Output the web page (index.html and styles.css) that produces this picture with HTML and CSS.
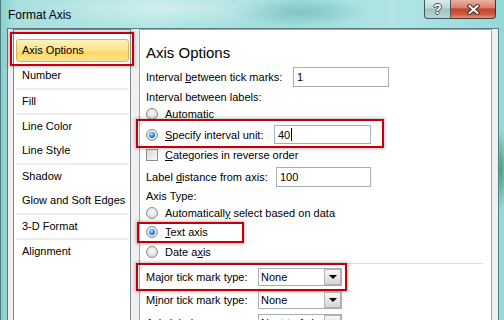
FILE: index.html
```html
<!DOCTYPE html>
<html lang="en">
<head>
	<meta charset="UTF-8">
	<title>Format Axis</title>
	<link rel="stylesheet" href="styles.css">
</head>
<body>
	<div class="window">
		<!--title bar-->
		<div class="titlebar">
			<span class="title">Format Axis</span>
			<div class="caption">
				<span class="cbtn help">?</span>
				<span class="cbtn close">
					<svg width="13" height="11" viewBox="0 0 13 11">
						<path d="M2.5 2 L10.5 9 M10.5 2 L2.5 9" stroke="#4a2a26" stroke-width="4.2" stroke-linecap="square"/>
						<path d="M2.5 2 L10.5 9 M10.5 2 L2.5 9" stroke="#fff" stroke-width="2" stroke-linecap="square"/>
					</svg>
				</span>
			</div>
		</div>
		<div class="client">
			<!--category list-->
			<ul class="nav">
				<li class="current">Axis Options<span class="mark nav-mark"></span></li>
				<li>Number</li>
				<li class="sep">Fill</li>
				<li class="sep">Line Color</li>
				<li>Line Style</li>
				<li class="sep">Shadow</li>
				<li>Glow and Soft Edges</li>
				<li class="sep">3-D Format</li>
				<li class="sep">Alignment</li>
			</ul>
			<!--options-->
			<div class="panel">
				<h1>Axis Options</h1>
				<div class="row r-tick">
					<span class="lbl lbl-tick">Interval <u>b</u>etween tick marks:</span>
					<span class="field f-tick">1</span>
				</div>
				<div class="row r-labels"><span>Interval between labels:</span></div>
				<div class="row r-auto"><span class="radio"></span><span>Automatic</span></div>
				<div class="row r-spec">
					<span class="radio on"></span>
					<span class="lbl lbl-spec"><u>S</u>pecify interval unit:</span>
					<span class="field f-spec">40<span class="caret"></span></span>
					<span class="mark spec-mark"></span>
				</div>
				<div class="row r-cat"><span class="check"></span><span><u>C</u>ategories in reverse order</span></div>
				<div class="row r-dist">
					<span class="lbl lbl-dist">Label <u>d</u>istance from axis:</span>
					<span class="field f-dist">100</span>
				</div>
				<div class="row r-type"><span>Axis Type:</span></div>
				<div class="row r-autosel"><span class="radio"></span><span>Automaticall<u>y</u> select based on data</span></div>
				<div class="row r-text"><span class="radio on"></span><span><u>T</u>ext axis</span><span class="mark text-mark"></span></div>
				<div class="row r-date"><span class="radio"></span><span>Date a<u>x</u>is</span></div>
				<div class="rule"></div>
				<div class="row r-major">
					<span class="lbl lbl-sel">Ma<u>j</u>or tick mark type:</span>
					<span class="select">None<span class="btn"></span></span>
					<span class="mark major-mark"></span>
				</div>
				<div class="row r-minor">
					<span class="lbl lbl-sel">M<u>i</u>nor tick mark type:</span>
					<span class="select">None<span class="btn"></span></span>
				</div>
				<div class="row r-axlab">
					<span class="lbl lbl-sel"><u>A</u>xis labels:</span>
					<span class="select">Next to Axis<span class="btn"></span></span>
				</div>
			</div>
		</div>
	</div>
</body>
</html>
```

FILE: styles.css
```css
body{
	margin:0;
	width:504px;
	height:320px;
	overflow:hidden;
	font:11px "Liberation Sans", Arial, sans-serif;
	color:#000;
	background:
		radial-gradient(ellipse 70px 14px at 300px 12px, rgba(70,150,150,.35), transparent),
		radial-gradient(ellipse 140px 18px at 170px 8px, rgba(255,255,255,.35), transparent),
		radial-gradient(ellipse 6px 40px at 501px 170px, rgba(60,140,100,.8), transparent),
		linear-gradient(90deg, #86cfcc 0, #a9dfdf 3%, #b6e6e6 30%, #9fdcdc 58%, #b2e5e5 78%, #95d8d8 100%);
}
.window{
	height:320px;
	border-left:1px solid #4e7d7f;
	box-sizing:border-box;
}
/*title bar*/
.titlebar{
	height:28px;
	display:flex;
	align-items:flex-start;
}
.title{
	padding:8px 0 0 7px;
	font-size:12px;
	line-height:14px;
}
.caption{
	margin-left:auto;
	margin-right:8px;
	display:flex;
	height:19px;
}
.cbtn{
	display:flex;
	align-items:center;
	justify-content:center;
	box-sizing:border-box;
	height:19px;
	border:1px solid #3e585c;
	border-top:0;
}
.help{
	width:27px;
	border-radius:0 0 0 4px;
	background:linear-gradient(#dcecec, #bcd6d8 45%, #9fc0c3 50%, #b8d8da);
	color:#fff;
	font-weight:bold;
	font-size:14px;
	text-shadow:1px 0 #3d5457, -1px 0 #3d5457, 0 1px #3d5457, 0 -1px #3d5457;
}
.close{
	width:45px;
	border-left:0;
	border-color:#4a3430;
	border-radius:0 0 4px 0;
	background:linear-gradient(#eab0a0, #d98270 42%, #c4442c 50%, #cf5a40 80%, #e69479);
}
/*client area*/
.client{
	margin-left:6px;
	width:492px;
	height:292px;
	box-sizing:border-box;
	border:1px solid #557c80;
	border-bottom:0;
	background:#f0f0f0;
	display:flex;
	align-items:flex-start;
	gap:8px;
	padding:0 6px 0 5px;
}
.mark{
	position:absolute;
	box-sizing:border-box;
	border:2px solid #c2000d;
	box-shadow:0 0 3px 1px rgba(0,0,0,.25);
}
/*list*/
.nav{
	list-style:none;
	margin:0;
	padding:8px 0 0;
	width:118px;
	height:300px;
	box-sizing:border-box;
	border:1px solid #828790;
	background:#fff;
}
.nav li{
	height:25px;
	line-height:25px;
	margin:0 1px 0 2px;
	padding-left:6px;
	box-sizing:border-box;
	white-space:nowrap;
}
.nav li.sep{
	border-top:2px solid #ebebf0;
	line-height:23px;
}
.nav li.current{
	position:relative;
	height:23px;
	line-height:21px;
	margin-top:1px;
	margin-bottom:1px;
	padding-left:5px;
	border:1px solid #d6b45a;
	border-radius:3px;
	background:linear-gradient(#fef3bf, #fde48e 45%, #fcd86a 60%, #fde391);
}
.nav-mark{
	left:-7px;
	top:-8px;
	width:124px;
	height:34px;
}
/*panel*/
.panel{
	width:353px;
	height:300px;
	box-sizing:border-box;
	border:1px solid #a5a5ad;
	background:#fff;
	padding:12px 0 0 6px;
}
h1{
	margin:0;
	height:22px;
	line-height:22px;
	font-size:15px;
	font-weight:normal;
}
.row{
	display:flex;
	align-items:center;
	position:relative;
	white-space:nowrap;
}
.r-tick{height:26px;}
.r-labels{height:14px;}
.r-auto{height:20px;}
.r-spec{height:21px;}
.r-cat{height:20px;}
.r-dist{height:23px;}
.r-type{height:16px;}
.r-autosel{height:18px;}
.r-text{height:20px;}
.r-date{height:19px;}
.r-major{height:24px;}
.r-minor{height:21px;}
.r-axlab{height:26px;}

.lbl-tick{width:147px;}
.lbl-spec{width:109px;}
.lbl-dist{width:130px;}
.lbl-sel{width:112px;}

.field{
	display:flex;
	align-items:center;
	height:20px;
	box-sizing:border-box;
	border:1px solid #a9aeb6;
	padding-left:3px;
}
.f-tick{width:96px;}
.f-spec{width:97px;height:19px;}
.f-dist{width:95px;}
.caret{
	display:inline-block;
	width:1px;
	height:13px;
	margin-left:1px;
	background:#000;
}
.radio{
	position:relative;
	flex:none;
	width:12px;
	height:12px;
	box-sizing:border-box;
	border-radius:50%;
	border:1px solid #8e8f8f;
	background:radial-gradient(circle at 50% 40%, #fbfbfb, #dedede 65%, #c4c4c4);
	margin-right:7px;
}
.radio.on::after{
	content:'';
	position:absolute;
	left:2px;
	top:2px;
	width:6px;
	height:6px;
	border-radius:50%;
	background:radial-gradient(circle at 40% 35%, #b0e6fc, #2e8bd2 50%, #123f70);
}
.check{
	flex:none;
	width:12px;
	height:12px;
	box-sizing:border-box;
	border:1px solid #8e8f8f;
	background:linear-gradient(135deg, #d6d6d6, #fbfbfb);
	margin-right:7px;
}
.rule{
	width:337px;
	height:1px;
	margin:2px 0 1px;
	background:#dcdcdc;
}
.select{
	display:flex;
	align-items:center;
	width:84px;
	height:18px;
	box-sizing:border-box;
	border:1px solid #a9aeb6;
	padding-left:2px;
}
.select .btn{
	margin-left:auto;
	width:17px;
	height:16px;
	box-sizing:border-box;
	border:1px solid #b3b3b3;
	background:linear-gradient(#f7f7f7, #e6e6e6 50%, #d6d6d6);
	display:flex;
	align-items:center;
	justify-content:center;
}
.select .btn::after{
	content:'';
	border-left:4px solid transparent;
	border-right:4px solid transparent;
	border-top:4px solid #000;
}
/*red markers*/
.spec-mark{
	left:-10px;
	top:-5px;
	width:248px;
	height:29px;
}
.text-mark{
	left:-9px;
	top:0;
	width:107px;
	height:21px;
}
.major-mark{
	left:-10px;
	top:-2px;
	width:211px;
	height:28px;
}
```
